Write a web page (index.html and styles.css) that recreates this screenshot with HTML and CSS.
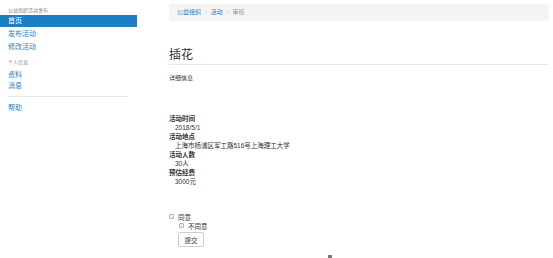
FILE: index.html
```html
<!DOCTYPE html>
<html lang="zh-CN">
<head>
  <meta charset="UTF-8" />
  <title>活动审核</title>
  <link rel="stylesheet" href="styles.css">
</head>
<body>
  <div class="page">
    <div class="sidebar">
      <div class="nav-title">公益组织活动发布</div>
      <a class="nav-item active" href="#">首页</a>
      <a class="nav-item" href="#">发布活动</a>
      <a class="nav-item" href="#">修改活动</a>
      <div class="nav-title second">个人信息</div>
      <a class="nav-item short" href="#">资料</a>
      <a class="nav-item short" href="#">消息</a>
      <div class="divider"></div>
      <a class="nav-item" href="#">帮助</a>
    </div>

    <div class="main">
      <div class="breadcrumb">
        <a href="#">公益组织</a><span class="sep">/</span><a href="#">活动</a><span class="sep">/</span><span class="current">审核</span>
      </div>

      <h1 class="title">插花</h1>
      <p class="subtitle">详细信息</p>

      <dl class="details">
        <dt>活动时间</dt>
        <dd>2018/5/1</dd>
        <dt>活动地点</dt>
        <dd>上海市杨浦区军工路516号上海理工大学</dd>
        <dt>活动人数</dt>
        <dd>30人</dd>
        <dt>预估经费</dt>
        <dd>3000元</dd>
      </dl>

      <form class="review">
        <label class="check"><input type="checkbox"> 同意</label>
        <label class="check indent"><input type="checkbox"> 不同意</label>
        <button type="submit">提交</button>
      </form>
    </div>
  </div>
  <div class="tiny-mark"></div>
</body>
</html>
```

FILE: styles.css
```css
body {
  margin: 0;
  font-family: "Liberation Sans", "Noto Sans CJK SC", sans-serif;
  font-size: 7px;
  color: #333;
  background: #fff;
}
a {
  color: #2a7fc4;
  text-decoration: none;
}
.page {
  display: flex;
}
.sidebar {
  width: 137px;
  flex-shrink: 0;
  padding-top: 6px;
}
.nav-title {
  font-size: 5px;
  color: #888;
  padding: 0 8px;
  height: 9px;
  line-height: 8px;
}
.nav-title.second {
  margin-top: 5px;
  height: 11px;
}
.nav-item {
  display: block;
  padding: 0 8px;
  height: 12px;
  line-height: 12px;
  margin-bottom: 1px;
  font-size: 7px;
}
.nav-item.short {
  height: 11px;
  line-height: 11px;
  margin-bottom: 0;
}
.nav-item.active {
  background: #1b7fc6;
  color: #fff;
}
.divider {
  height: 1px;
  background: #e8e8e8;
  margin: 5px 9px 5px 8px;
}
.main {
  flex: 1;
  padding: 4px 4px 0 32px;
}
.breadcrumb {
  background: #f4f4f4;
  border-radius: 2px;
  height: 17px;
  line-height: 17px;
  padding: 0 8px;
  font-size: 6px;
  color: #999;
}
.breadcrumb .sep {
  color: #ccc;
  margin: 0 4px;
}
.title {
  font-size: 12px;
  font-weight: normal;
  margin: 27px 0 0;
  padding-bottom: 2px;
  border-bottom: 1px solid #e8e8e8;
  line-height: 14px;
}
.subtitle {
  font-size: 6px;
  margin: 8px 0 0;
}
.details {
  margin: 32px 0 0;
  line-height: 9px;
}
.details dt {
  font-weight: bold;
  font-size: 6.5px;
}
.details dd {
  margin-left: 6px;
  font-size: 6.5px;
}
.review {
  margin-top: 26px;
  display: flex;
  flex-direction: column;
  align-items: flex-start;
}
.check {
  display: flex;
  align-items: center;
  font-size: 6.5px;
  height: 9px;
}
.check input {
  appearance: none;
  width: 5px;
  height: 5px;
  margin: 0 4px 0 0;
  border: 1px solid #b5b5b5;
  border-radius: 1px;
  background: #eee;
}
.check.indent {
  margin-left: 10px;
}
button {
  margin: 2px 0 0 9px;
  font-family: inherit;
  font-size: 6.5px;
  color: #333;
  background: #fff;
  border: 1px solid #ccc;
  border-radius: 2px;
  width: 26px;
  height: 15px;
  padding: 0;
}
.tiny-mark {
  position: absolute;
  left: 328px;
  top: 255px;
  width: 4px;
  height: 3px;
  background: #777;
}
```
